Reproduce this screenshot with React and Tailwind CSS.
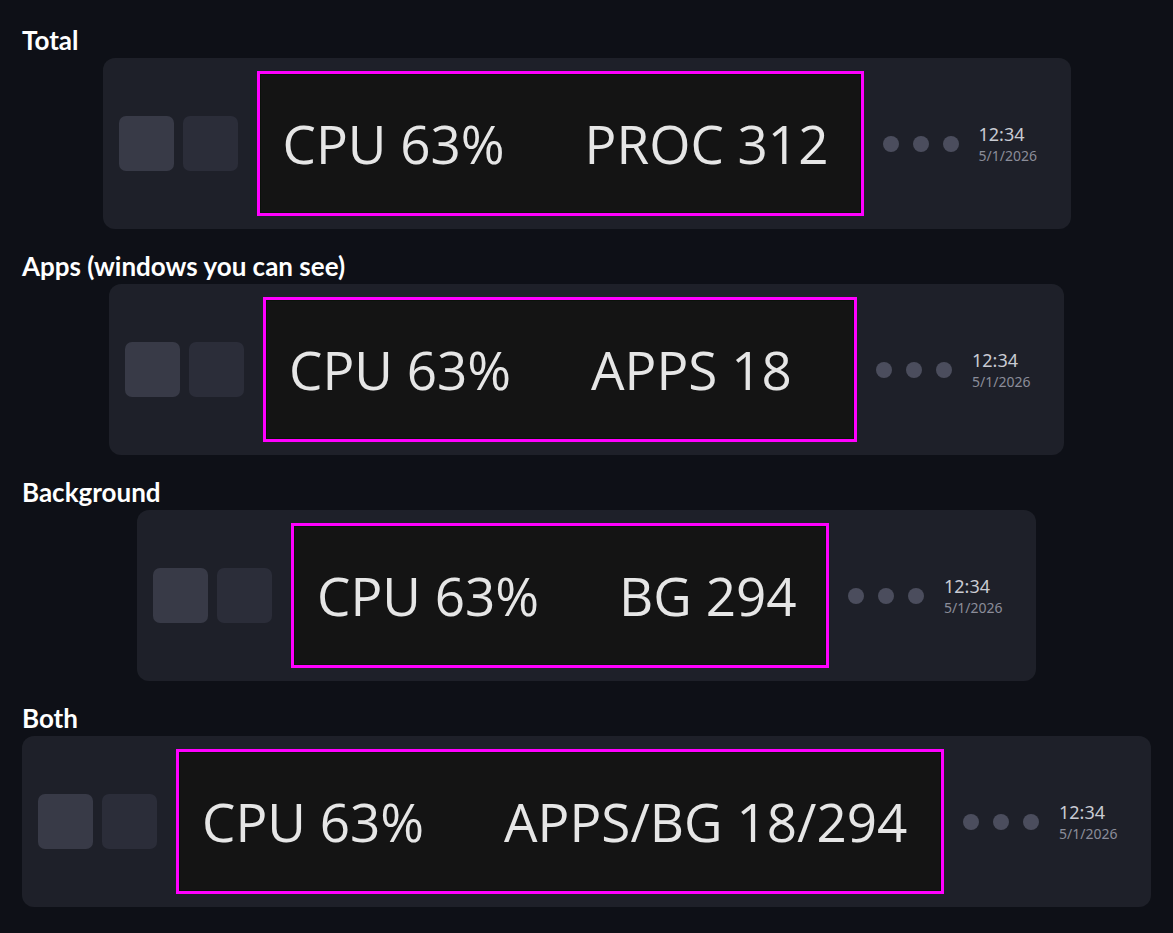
const variants = [
  { label: "Total", right: "PROC 312", box: "w-[607px]" },
  { label: "Apps (windows you can see)", right: "APPS 18", box: "w-[594px]" },
  { label: "Background", right: "BG 294", box: "w-[538px]" },
  { label: "Both", right: "APPS/BG 18/294", box: "w-[768px]" },
];

const Taskbar = ({ right, box }) => (
  <div className="mx-auto flex h-[171px] w-fit items-center rounded-[12px] bg-[#1e2029] pl-4 pr-8">
    {/* left tiles */}
    <div className="flex gap-[9px]">
      <div className="h-[55px] w-[55px] rounded-[7px] bg-[#383a47]" />
      <div className="h-[55px] w-[55px] rounded-[7px] bg-[#2b2d39]" />
    </div>

    {/* highlighted readout */}
    <div className={`ml-[19px] h-[145px] ${box} border-[3px] border-[#ff00ff] bg-[#0a120a] p-px`}>
      <div className="flex h-full items-center gap-[80px] bg-[#141414] pl-[22px] font-['Open_Sans',sans-serif] text-[53px] leading-none text-[#e6e6e6]">
        <span>CPU 63%</span>
        <span>{right}</span>
      </div>
    </div>

    {/* tray dots */}
    <div className="ml-[19px] flex gap-[14px]">
      <div className="h-4 w-4 rounded-full bg-[#4b4d5d]" />
      <div className="h-4 w-4 rounded-full bg-[#4b4d5d]" />
      <div className="h-4 w-4 rounded-full bg-[#4b4d5d]" />
    </div>

    {/* clock */}
    <div className="ml-5 flex w-[60px] flex-col gap-[2px] font-['Noto_Sans',sans-serif]">
      <span className="text-[18px] leading-[22px] text-[#c9cbd3]">12:34</span>
      <span className="text-[14px] leading-[18px] text-[#8b8d99]">5/1/2026</span>
    </div>
  </div>
);

export default function App() {
  return (
    <div className="min-h-[933px] bg-[#0e1017] px-[22px] pt-6">
      {variants.map((v) => (
        <section key={v.label} className="mb-[21px]">
          <h2 className="mb-[6px] h-[28px] font-['Lato',sans-serif] text-[26px] font-bold leading-[32px] text-white">{v.label}</h2>
          <Taskbar right={v.right} box={v.box} />
        </section>
      ))}
    </div>
  );
}
